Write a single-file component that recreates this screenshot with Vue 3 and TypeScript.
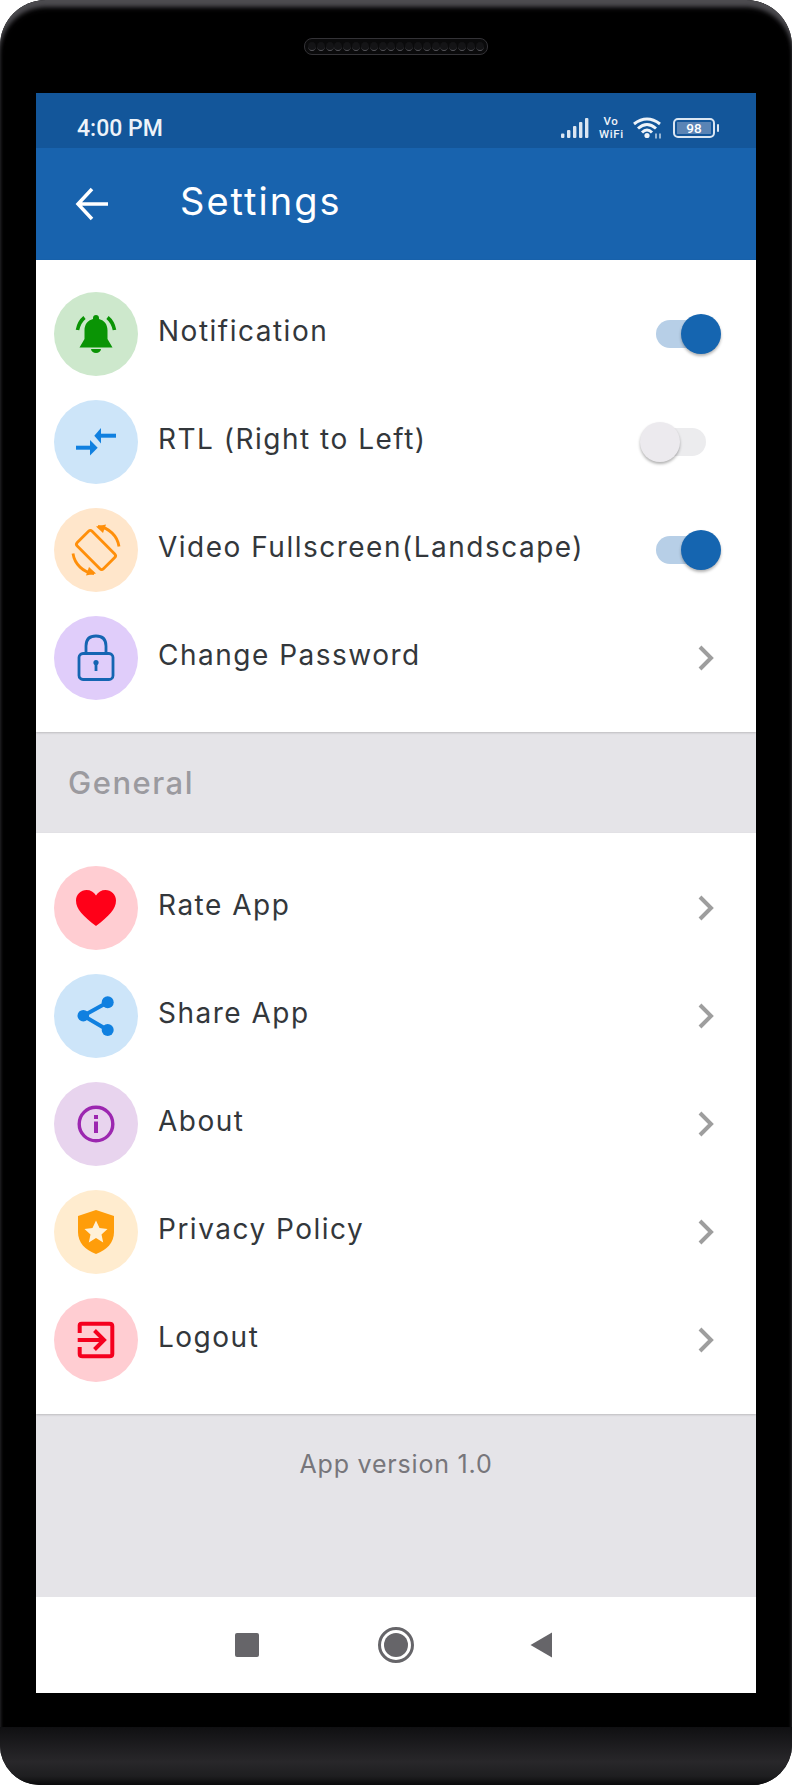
<script setup lang="ts">
type Row = { label: string; kind: string; tone: string; control: 'on' | 'off' | 'chevron' }

const settings: Row[] = [
  { label: 'Notification', kind: 'bell', tone: 'green', control: 'on' },
  { label: 'RTL (Right to Left)', kind: 'arrows', tone: 'blue', control: 'off' },
  { label: 'Video Fullscreen(Landscape)', kind: 'rotate', tone: 'orange', control: 'on' },
  { label: 'Change Password', kind: 'lock', tone: 'violet', control: 'chevron' },
]
const general: Row[] = [
  { label: 'Rate App', kind: 'heart', tone: 'red', control: 'chevron' },
  { label: 'Share App', kind: 'share', tone: 'blue', control: 'chevron' },
  { label: 'About', kind: 'info', tone: 'purple', control: 'chevron' },
  { label: 'Privacy Policy', kind: 'shield', tone: 'amber', control: 'chevron' },
  { label: 'Logout', kind: 'logout', tone: 'red', control: 'chevron' },
]
const groups = [settings, general]
const holes = Array.from({ length: 20 }, (_, i) => i)
</script>

<template>
  <div class="phone">
    <div class="bezel-top">
      <div class="speaker">
        <span v-for="h in holes" :key="h" class="hole"></span>
      </div>
    </div>
    <div class="screen">
      <div class="status">
        <span class="time">4:00 PM</span>
        <div class="status-icons">
          <svg width="28" height="20" viewBox="0 0 28 20" class="signal">
            <rect x="0" y="15.500" width="3.400" height="4.500" rx="1" />
            <rect x="6" y="12" width="3.400" height="8" rx="1" />
            <rect x="12" y="8" width="3.400" height="12" rx="1" />
            <rect x="18" y="4" width="3.400" height="16" rx="1" />
            <rect x="24" y="0" width="3.400" height="20" rx="1" />
          </svg>
          <span class="vowifi">Vo<br />WiFi</span>
          <svg width="30" height="22" viewBox="0 0 30 22" class="wifi">
            <path d="M1 7 Q14 -3 27 7" />
            <path d="M5 11.500 Q14 3.500 23 11.500" />
            <path d="M9 15.500 Q14 10.500 19 15.500" />
            <circle cx="14" cy="18.500" r="2.600" class="fill" />
            <path d="M23 21.500v-5M27 21.500v-5" class="thin" />
          </svg>
          <div class="battery">
            <div class="battery-body"><span class="battery-level">98</span></div>
            <span class="battery-tip"></span>
          </div>
        </div>
      </div>
      <header class="appbar">
        <svg class="back" width="34" height="34" viewBox="0 0 34 34">
          <path d="M33 17H3.500M17 2 3 17 17 32" />
        </svg>
        <h1 class="title">Settings</h1>
      </header>

      <main class="content">
        <template v-for="(group, g) in groups" :key="g">
          <section class="list" :class="{ second: g === 1 }">
            <div v-for="row in group" :key="row.label" class="row">
              <div class="badge" :class="row.tone">
                <svg width="44" height="44" viewBox="0 0 44 44" class="ico">
                  <g v-if="row.kind === 'bell'" fill="#0a9405">
                    <path d="M22 3c1.800 0 3 1.300 3 3v1c5.500 1.500 8.500 5.500 8.500 11.500v8.500L38.500 35.500H5.500l5-8.500v-8.500C10.500 12.500 13.500 8.500 19 7V6c0-1.700 1.200-3 3-3Z" />
                    <path d="M17 37h10a5 4 0 0 1-10 0Z" />
                    <path d="M10.500 5.500Q5 10 3.500 18M33.500 5.500Q39 10 40.500 18" fill="none" stroke="#0a9405" stroke-width="3.600" />
                  </g>
                  <g v-else-if="row.kind === 'arrows'" fill="#1080e0">
                    <path d="M42 13.700H26v4h16Z" />
                    <path d="M20.300 15.700 27 8v15.400Z" />
                    <path d="M2 25.700h15v4H2Z" />
                    <path d="M23.700 27.700 16 20v15.500Z" />
                  </g>
                  <g v-else-if="row.kind === 'rotate'" fill="none" stroke="#ff8f0a" stroke-width="2.800">
                    <rect x="11.500" y="3.500" width="21" height="37" rx="2.500" transform="rotate(-45 22 22)" />
                    <path d="M24 -1.500A23.500 23.500 0 0 1 45 18.500" />
                    <path d="M20 45.500A23.500 23.500 0 0 1 -1 25.500" />
                    <path d="M22 -1.500 32 -3.500 29 5Z" fill="#ff8f0a" stroke="none" />
                    <path d="M22 45.500 12 47.500 15 39Z" fill="#ff8f0a" stroke="none" />
                  </g>
                  <g v-else-if="row.kind === 'lock'" fill="none" stroke="#1565b2" stroke-width="2.800">
                    <rect x="5" y="17.500" width="34" height="26" rx="4" />
                    <path d="M12 17.500V10C12 3 16 0 22 0S32 3 32 10V17.500" />
                    <circle cx="22" cy="26.500" r="2.600" fill="#1565b2" stroke="none" />
                    <rect x="20.600" y="27" width="2.800" height="8" fill="#1565b2" stroke="none" />
                  </g>
                  <path v-else-if="row.kind === 'heart'" fill="#ff0018" d="M22 40C9 30 2 23 2 14.500 2 8.500 7 4 12.500 4c4 0 7.500 2 9.500 5.500C24 6 27.500 4 31.500 4 37 4 42 8.500 42 14.500 42 23 35 30 22 40Z" />
                  <g v-else-if="row.kind === 'share'" fill="#1080e0">
                    <circle cx="33.700" cy="8.300" r="6" />
                    <circle cx="33.700" cy="36" r="6" />
                    <circle cx="9.300" cy="21.700" r="5.800" />
                    <path d="M33.700 8.300 9.300 21.700 33.700 36" fill="none" stroke="#1080e0" stroke-width="4" />
                  </g>
                  <g v-else-if="row.kind === 'info'">
                    <circle cx="22" cy="22" r="16.800" fill="none" stroke="#9c27b0" stroke-width="3.400" />
                    <rect x="20" y="19.500" width="4" height="11.500" fill="#9c27b0" />
                    <rect x="20" y="13" width="4" height="4" fill="#9c27b0" />
                  </g>
                  <g v-else-if="row.kind === 'shield'">
                    <path fill="#ff9d0a" d="M22 0 40 6v16c0 10.500-7 18-18 22C11 40 4 32.500 4 22V6Z" />
                    <path fill="#fff1d8" d="m22 10.500 3.500 7.500 8 1-6 5.500 1.700 8L22 28l-7.200 4.500 1.700-8-6-5.500 8-1Z" />
                  </g>
                  <g v-else-if="row.kind === 'logout'" fill="none" stroke="#f5001e" stroke-width="4">
                    <path d="M5.700 15V7C5.700 5.500 7 5.700 8.500 5.700h27C37 5.700 38.300 6.500 38.300 8v28c0 1.500-1.300 2.300-2.800 2.300h-27C7 38.300 5.700 37.500 5.700 36V29" />
                    <path d="M3.700 22H30M20.500 12.500l9.500 9.500-9.500 9.500" />
                  </g>
                </svg>
              </div>
              <span class="label">{{ row.label }}</span>
              <div v-if="row.control === 'on'" class="toggle on"><span class="thumb"></span></div>
              <div v-else-if="row.control === 'off'" class="toggle off"><span class="thumb"></span></div>
              <svg v-else class="chev" width="18" height="26" viewBox="0 0 18 26">
                <path d="M2 2 13 13 2 24" />
              </svg>
            </div>
          </section>
          <div v-if="g === 0" class="band"><span>General</span></div>
        </template>
        <footer class="version"><span>App version 1.0</span></footer>
      </main>

      <nav class="navbar">
        <span class="nav-square"></span>
        <span class="nav-circle"><span></span></span>
        <svg width="24" height="28" viewBox="0 0 24 28" class="nav-back"><path d="M23 1.500V26.500L1.500 14Z" /></svg>
      </nav>
    </div>
    <div class="chin"></div>
  </div>
</template>

<style>
html, body { margin: 0; background: #fff; }
</style>

<style scoped>
.phone {
  width: 792px;
  height: 1785px;
  background: #000;
  border-radius: 46px 46px 40px 40px;
  overflow: hidden;
  display: flex;
  flex-direction: column;
  position: relative;
  font-family: Inter, "Noto Sans", sans-serif;
  box-shadow: inset 0 7px 4px -1px #4d4c50, inset 0 9px 6px -2px #2b2a2e;
}
.bezel-top { height: 93px; display: flex; justify-content: center; align-items: flex-start; }
.speaker {
  margin-top: 38px;
  width: 184px;
  height: 17px;
  box-sizing: border-box;
  border-radius: 8px;
  border: 1.500px solid #333236;
  background: #0a0a0b;
  display: flex;
  align-items: center;
  padding: 0 3px;
  justify-content: space-between;
}
.hole {
  width: 8px;
  height: 9px;
  border-radius: 50%;
  border-bottom: 1px solid #55545a;
  background: #141416;
  box-sizing: border-box;
}
.screen { margin: 0 36px; width: 720px; display: flex; flex-direction: column; background: #fff; }
.status {
  height: 55px;
  box-sizing: border-box;
  background: #13569a;
  display: flex;
  align-items: center;
  justify-content: space-between;
  padding: 15px 37px 0 41px;
  color: #eef3f9;
}
.time { font-family: Roboto, sans-serif; font-size: 23px; font-weight: 500; }
.status-icons { display: flex; align-items: center; gap: 10px; }
.signal { fill: #dbe6f2; }
.vowifi {
  font-family: Roboto, sans-serif;
  font-size: 11.500px;
  line-height: 13.500px;
  letter-spacing: 0.600px;
  font-weight: 500;
  text-align: center;
  width: 24px;
}
.wifi path { fill: none; stroke: #eef3f9; stroke-width: 3; }
.wifi .thin { stroke-width: 1.200; }
.wifi .fill { fill: #eef3f9; }
.battery { display: flex; align-items: center; gap: 2px; }
.battery-body {
  width: 42px;
  height: 20px;
  box-sizing: border-box;
  border: 2px solid #dbe6f2;
  border-radius: 5px;
  padding: 2px;
  display: flex;
}
.battery-level {
  flex: 1;
  background: #5a84b5;
  color: #fff;
  font-family: Roboto, sans-serif;
  font-size: 13.500px;
  line-height: 12px;
  font-weight: 500;
  text-align: center;
}
.battery-tip { width: 2px; height: 8px; background: #dbe6f2; border-radius: 1px; }
.appbar {
  height: 112px;
  background: #1863ae;
  display: flex;
  align-items: center;
  box-sizing: border-box;
  padding-left: 39px;
}
.back path { fill: none; stroke: #fff; stroke-width: 3.500; }
.title {
  margin: 0 0 6px 71px;
  font-size: 38px;
  font-weight: 400;
  color: #fff;
  letter-spacing: 2px;
}
.content { display: flex; flex-direction: column; }
.list { padding: 20px 0; background: #fff; box-shadow: 0 1px 2px rgba(0, 0, 0, 0.18); position: relative; }
.list.second { padding-top: 21px; }
.row { height: 108px; display: flex; align-items: center; padding: 0 40px 0 18px; }
.badge {
  width: 84px;
  height: 84px;
  border-radius: 50%;
  display: flex;
  align-items: center;
  justify-content: center;
  flex: none;
}
.ico { overflow: visible; }
.green { background: #cde8cc; }
.blue { background: #cde5f9; }
.orange { background: #ffe6cb; }
.violet { background: #e0cdfa; }
.red { background: #ffcdd2; }
.purple { background: #e8d4ee; }
.amber { background: #ffeccf; }
.label {
  margin: 0 0 7px 20px;
  flex: 1;
  font-size: 28px;
  color: #33373b;
  letter-spacing: 1.500px;
}
.toggle { position: relative; width: 56px; height: 28px; border-radius: 14px; flex: none; }
.toggle.on { background: #b7cfe7; margin-right: 4px; }
.toggle.off { background: #ececee; margin-right: 10px; }
.thumb {
  position: absolute;
  top: -6px;
  width: 40px;
  height: 40px;
  border-radius: 50%;
  box-shadow: 0 2px 3px rgba(0, 0, 0, 0.3);
}
.on .thumb { right: -9px; background: #1565b0; }
.off .thumb { left: -10px; background: #eceaee; }
.chev path { fill: none; stroke: #9e9e9e; stroke-width: 4; }
.band {
  height: 101px;
  box-sizing: border-box;
  background: #e5e4e8;
  display: flex;
  align-items: center;
  padding-left: 32px;
  font-size: 31px;
  font-weight: 500;
  color: #9b9a9f;
  letter-spacing: 1.500px;
}
.version {
  height: 183px;
  box-sizing: border-box;
  background: #e5e4e8;
  text-align: center;
  padding-top: 35px;
  font-size: 25px;
  color: #77767b;
  letter-spacing: 0.800px;
}
.navbar {
  height: 96px;
  background: #fff;
  display: flex;
  align-items: center;
  justify-content: center;
  position: relative;
}
.nav-square { position: absolute; left: 199px; top: 36px; width: 24px; height: 24px; border-radius: 2px; background: #666569; }
.nav-circle {
  position: absolute;
  left: 342px;
  top: 30px;
  width: 36px;
  height: 36px;
  box-sizing: border-box;
  border: 3px solid #666569;
  border-radius: 50%;
  padding: 3px;
  display: flex;
}
.nav-circle span { flex: 1; background: #666569; border-radius: 50%; }
.nav-back { position: absolute; left: 493px; top: 34px; fill: #666569; }
.chin {
  position: absolute;
  left: 0;
  right: 0;
  bottom: 0;
  height: 58px;
  background: linear-gradient(#101012, #28272a 60%, #1e1e20 85%, #0a0a0b);
}
</style>
